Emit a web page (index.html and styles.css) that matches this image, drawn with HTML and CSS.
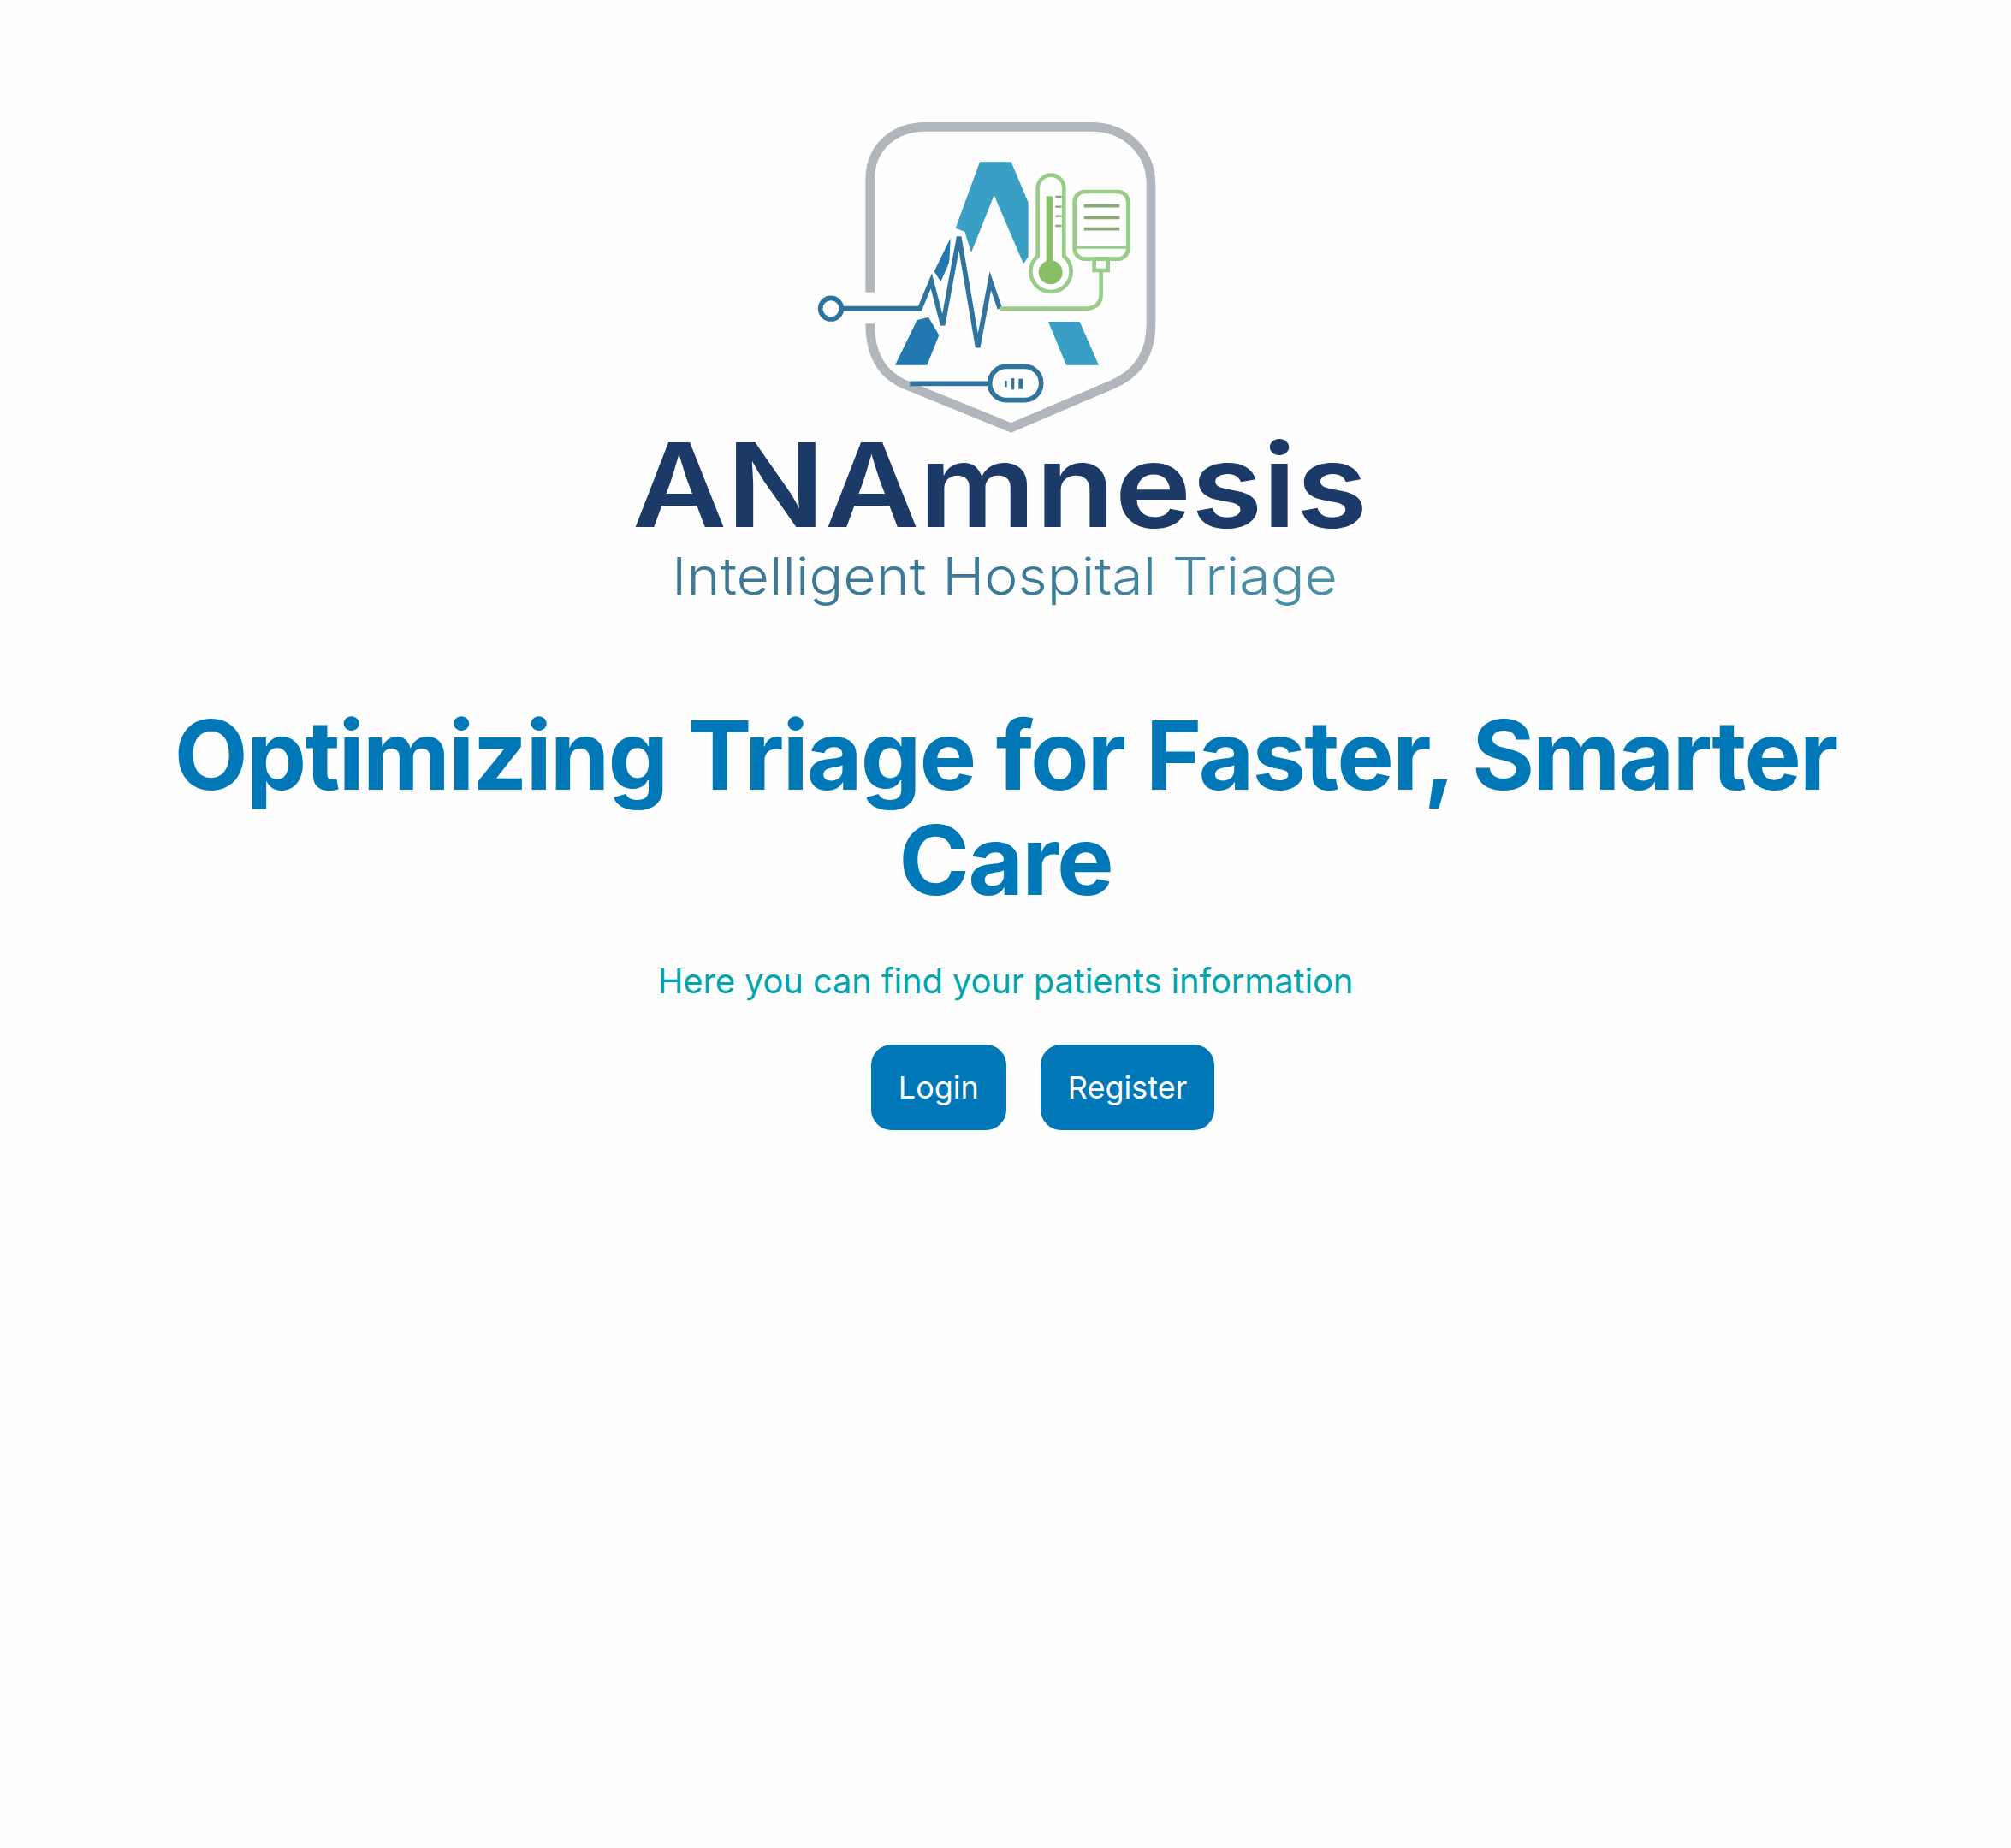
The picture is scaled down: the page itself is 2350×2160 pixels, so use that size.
FILE: index.html
```html
<!DOCTYPE html>
<html lang="en">
<head>
    <meta charset="UTF-8">
    <title>ANAmnesis</title>
    <link rel="stylesheet" href="styles.css">
</head>
<body>

<main class="home">
    <!-- Logo -->
    <svg class="logo" viewBox="730 100 890 630" role="img" aria-label="ANAmnesis logo">
        <defs>
            <linearGradient id="subtitleFill" x1="0" y1="0" x2="1" y2="0">
                <stop offset="0" stop-color="#3f7a96"/>
                <stop offset="0.5" stop-color="#37799b"/>
                <stop offset="1" stop-color="#4a92a8"/>
            </linearGradient>
        </defs>
        <g transform="translate(900 120) scale(0.33333)">
            <!-- Shield -->
            <path class="shield" d="M350 665 V270 C350 160 430 85 545 85 H1125 C1245 85 1335 170 1335 285 V775 C1335 880 1290 950 1200 988 L845 1140 L465 985 C390 950 350 880 350 775"/>
            <!-- Letter A -->
            <polygon class="a-light" points="735,208 845,208 905,350 905,540 888,565 785,325 705,525 682,452 650,440"/>
            <polygon class="a-light" points="975,768 1085,768 1152,920 1038,920"/>
            <polygon class="a-dark" points="632,475 575,592 598,628 628,560"/>
            <polygon class="a-dark" points="515,762 555,752 592,815 550,920 438,920"/>
            <!-- Pulse -->
            <path class="halo" d="M525 722 L565 625 L605 780 L662 470 L728 858 L772 625 L805 722"/>
            <path class="pulse" d="M255 722 H525 L565 625 L605 780 L662 470 L728 858 L772 625 L805 722"/>
            <circle class="pulse node" cx="213" cy="722" r="37"/>
            <!-- Tube -->
            <path class="green" d="M805 722 H1105 Q1160 722 1160 670 V590"/>
            <!-- Thermometer -->
            <path class="green" d="M938 300 A46 46 0 0 1 1030 300 V538 A71 71 0 1 1 938 538 Z"/>
            <rect class="mercury" x="968" y="328" width="22" height="240"/>
            <circle class="mercury" cx="983" cy="595" r="42"/>
            <path class="tick" d="M1000 330 H1022 M1000 365 H1022 M1000 398 H1022 M1000 432 H1022"/>
            <!-- Bag -->
            <rect class="green" x="1067" y="312" width="188" height="236" rx="36"/>
            <path class="bag-line" d="M1100 362 H1225 M1100 403 H1225 M1100 443 H1225"/>
            <path class="green thin" d="M1067 508 H1255"/>
            <rect class="green" x="1136" y="548" width="48" height="40"/>
            <!-- Sensor -->
            <path class="pulse" d="M490 985 H770"/>
            <rect class="pulse node" x="770" y="925" width="180" height="118" rx="58"/>
            <rect class="bar" x="823" y="975" width="7" height="22"/>
            <rect class="bar" x="845" y="966" width="11" height="40"/>
            <rect class="bar" x="871" y="968" width="15" height="36"/>
        </g>
        <text class="logo-name" x="739" y="616" textLength="859" lengthAdjust="spacingAndGlyphs">ANAmnesis</text>
        <text class="logo-tag" x="785" y="695" textLength="778" lengthAdjust="spacingAndGlyphs">Intelligent Hospital Triage</text>
    </svg>

    <h1 class="title">Optimizing Triage for Faster, Smarter Care</h1>
    <p class="subtitle">Here you can find your patients information</p>

    <div class="actions">
        <a class="btn" href="#">Login</a>
        <a class="btn" href="#">Register</a>
    </div>
</main>

</body>
</html>
```

FILE: styles.css
```css
/* General */
body {
    margin: 0;
    background-color: #fefefe;
    font-family: Inter, "Noto Sans", sans-serif;
}
.home {
    min-height: 2160px;
    padding: 100px 128px 0;
    box-sizing: border-box;
    text-align: center;
}

/* Logo */
.logo {
    display: block;
    width: 890px;
    height: 630px;
    margin: 0 auto;
}
.logo-name {
    font-family: Inter, sans-serif;
    font-size: 136px;
    font-weight: 600;
    fill: #1b3a68;
}
.logo-tag {
    font-family: Inter, sans-serif;
    font-size: 60px;
    font-weight: 350;
    fill: url(#subtitleFill);
}
.shield {
    fill: none;
    stroke: #b1b5bc;
    stroke-width: 32;
}
.a-light {
    fill: #3a9fc4;
}
.a-dark {
    fill: #2378b0;
}
.halo {
    fill: none;
    stroke: #fff;
    stroke-width: 36;
    stroke-linejoin: round;
}
.pulse {
    fill: none;
    stroke: #2f739f;
    stroke-width: 17;
}
.node {
    fill: #fff;
}
.green {
    fill: none;
    stroke: #97cd87;
    stroke-width: 14;
}
.thin {
    stroke-width: 9;
}
.mercury {
    fill: #87bf68;
}
.tick {
    fill: none;
    stroke: #8aa87a;
    stroke-width: 7;
}
.bag-line {
    fill: none;
    stroke: #8aa87a;
    stroke-width: 11;
}
.bar {
    fill: #2f739f;
}

/* Text */
.title {
    margin: 91px 0 0;
    color: #0077b6;
    font-size: 112px;
    font-weight: 750;
    letter-spacing: -0.018em;
    line-height: 1.1;
}
.subtitle {
    margin: 50px 0 0;
    color: #00a5b0;
    font-size: 40px;
    font-weight: 425;
    letter-spacing: -0.004em;
    line-height: 1.5;
}

/* Buttons */
.actions {
    display: flex;
    justify-content: center;
    gap: 40px;
    margin-top: 44px;
    padding-left: 87px;
}
.btn {
    padding: 26px 32px;
    border-radius: 24px;
    background-color: #0077b6;
    color: #fff;
    font-size: 36px;
    font-weight: 425;
    line-height: 48px;
    text-decoration: none;
}
```
